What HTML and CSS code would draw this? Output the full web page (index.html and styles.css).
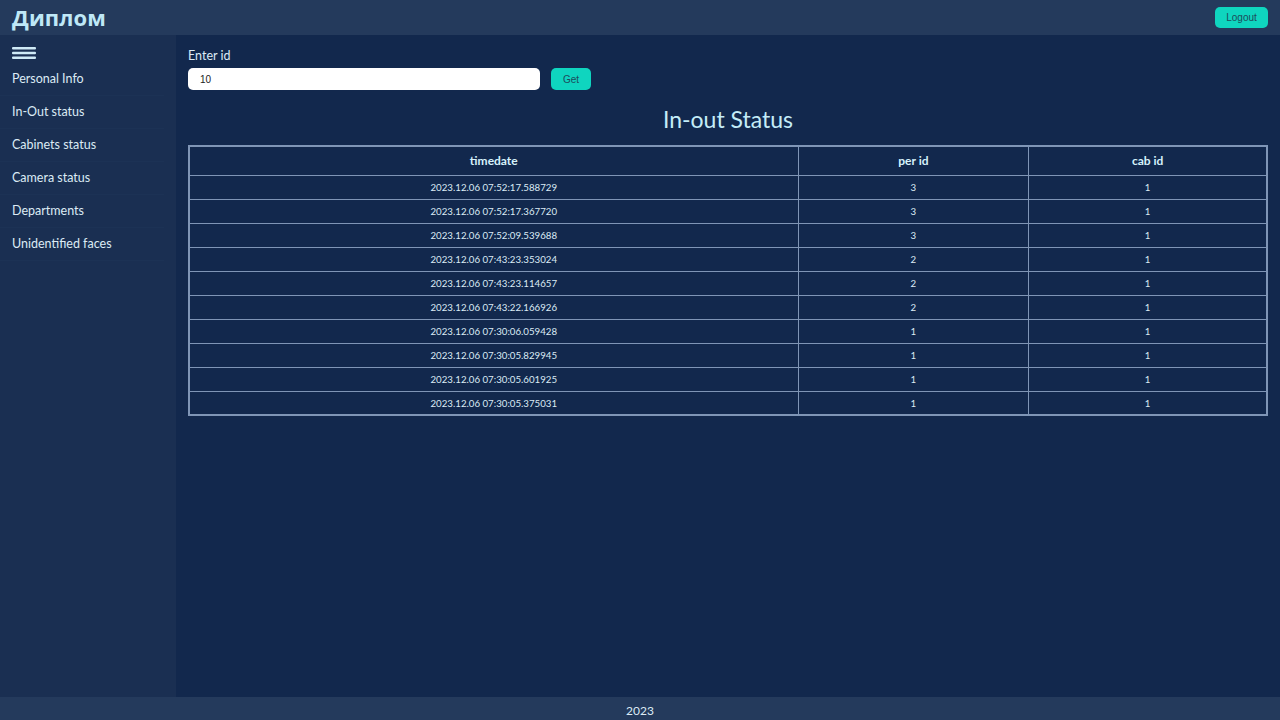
FILE: index.html
```html
<!DOCTYPE html>
<html lang="ru">
<head>
<meta charset="utf-8">
<title>Диплом</title>
<link rel="stylesheet" href="styles.css">
</head>
<body>
<header class="topbar">
  <div class="brand">Диплом</div>
  <button class="btn logout">Logout</button>
</header>
<div class="middle">
  <aside class="sidebar">
    <div class="burger">
      <svg width="24" height="12" viewBox="0 0 24 12"><rect x="0" y="0" width="24" height="2.6" rx="1" fill="#cfeaf6"/><rect x="0" y="4.7" width="24" height="2.6" rx="1" fill="#cfeaf6"/><rect x="0" y="9.4" width="24" height="2.6" rx="1" fill="#cfeaf6"/></svg>
    </div>
    <nav class="nav">
      <a class="nav-item">Personal Info</a>
      <a class="nav-item">In-Out status</a>
      <a class="nav-item">Cabinets status</a>
      <a class="nav-item">Camera status</a>
      <a class="nav-item">Departments</a>
      <a class="nav-item">Unidentified faces</a>
    </nav>
  </aside>
  <main class="main">
    <label class="label">Enter id</label>
    <div class="form-row">
      <input class="id-input" type="text" value="10">
      <button class="btn get">Get</button>
    </div>
    <h1 class="title">In-out Status</h1>
    <table class="data">
      <thead>
        <tr><th class="c-time">timedate</th><th class="c-per">per id</th><th class="c-cab">cab id</th></tr>
      </thead>
      <tbody>
        <tr><td>2023.12.06 07:52:17.588729</td><td>3</td><td>1</td></tr>
        <tr><td>2023.12.06 07:52:17.367720</td><td>3</td><td>1</td></tr>
        <tr><td>2023.12.06 07:52:09.539688</td><td>3</td><td>1</td></tr>
        <tr><td>2023.12.06 07:43:23.353024</td><td>2</td><td>1</td></tr>
        <tr><td>2023.12.06 07:43:23.114657</td><td>2</td><td>1</td></tr>
        <tr><td>2023.12.06 07:43:22.166926</td><td>2</td><td>1</td></tr>
        <tr><td>2023.12.06 07:30:06.059428</td><td>1</td><td>1</td></tr>
        <tr><td>2023.12.06 07:30:05.829945</td><td>1</td><td>1</td></tr>
        <tr><td>2023.12.06 07:30:05.601925</td><td>1</td><td>1</td></tr>
        <tr><td>2023.12.06 07:30:05.375031</td><td>1</td><td>1</td></tr>
      </tbody>
    </table>
  </main>
</div>
<footer class="footer">2023</footer>
</body>
</html>
```
FILE: styles.css
```css
* { box-sizing: border-box; }
html, body { height: 100%; }
body {
  margin: 0;
  display: flex;
  flex-direction: column;
  background: #12284d;
  color: #dcebf5;
  font-family: Lato, "Open Sans", "Liberation Sans", sans-serif;
}
.topbar {
  height: 35px;
  flex: 0 0 35px;
  background: #243a5c;
  display: flex;
  align-items: center;
  justify-content: space-between;
  padding: 0 12px;
}
.brand {
  font-family: "Open Sans", "Noto Sans", sans-serif;
  font-weight: 700;
  font-size: 22px;
  color: #bfe8f7;
  line-height: 1;
  margin-top: -1px;
  letter-spacing: 0.1px;
}
.btn {
  font-family: "Liberation Sans", Arial, sans-serif;
  border: none;
  background: #0fd5bf;
  color: #1d4c5c;
  border-radius: 5px;
  font-size: 10px;
  cursor: pointer;
}
.logout {
  width: 53px;
  height: 21px;
}
.middle {
  flex: 1;
  display: flex;
  min-height: 0;
}
.sidebar {
  width: 176px;
  flex: 0 0 176px;
  background: #1a2f52;
  padding-top: 12px;
}
.burger {
  padding-left: 12px;
  height: 16px;
  line-height: 0;
}
.nav {
  display: flex;
  flex-direction: column;
}
.nav-item {
  display: block;
  height: 33px;
  line-height: 31px;
  padding-left: 12px;
  width: 164px;
  font-size: 12.5px;
  color: #dcebf5;
  border-bottom: 1px solid #1c3255;
}
.main {
  flex: 1;
  padding: 13px 12px 0 12px;
  display: flex;
  flex-direction: column;
}
.label {
  font-size: 12.5px;
  color: #dcebf5;
  line-height: 16px;
}
.form-row {
  display: flex;
  gap: 11px;
  margin-top: 4px;
  height: 22px;
}
.id-input {
  width: 352px;
  height: 22px;
  border: none;
  border-radius: 5px;
  background: #ffffff;
  padding: 0 12px;
  font-family: "Liberation Sans", Arial, sans-serif;
  font-size: 10px;
  color: #222;
  outline: none;
}
.get {
  width: 40px;
  height: 22px;
}
.title {
  margin: 16px 0 13px 0;
  text-align: center;
  font-weight: 400;
  font-size: 23px;
  line-height: 26px;
  color: #c4ecf8;
}
.data {
  width: 100%;
  border-collapse: collapse;
  border: 2px solid #7f95b6;
  font-size: 9.7px;
}
.data th, .data td {
  border: 1px solid #7f95b6;
  text-align: center;
  padding: 0;
}
.data th {
  height: 29px;
  font-size: 12px;
  font-weight: 700;
  color: #d6f2fc;
}
.data td {
  height: 24px;
  color: #dcebf5;
}
.c-time { width: 56.5%; }
.c-per { width: 21.4%; }
.c-cab { width: 22.1%; }
.footer {
  height: 23px;
  flex: 0 0 23px;
  background: #243a5c;
  text-align: center;
  font-size: 12px;
  line-height: 28px;
  color: #dcebf5;
}
```
